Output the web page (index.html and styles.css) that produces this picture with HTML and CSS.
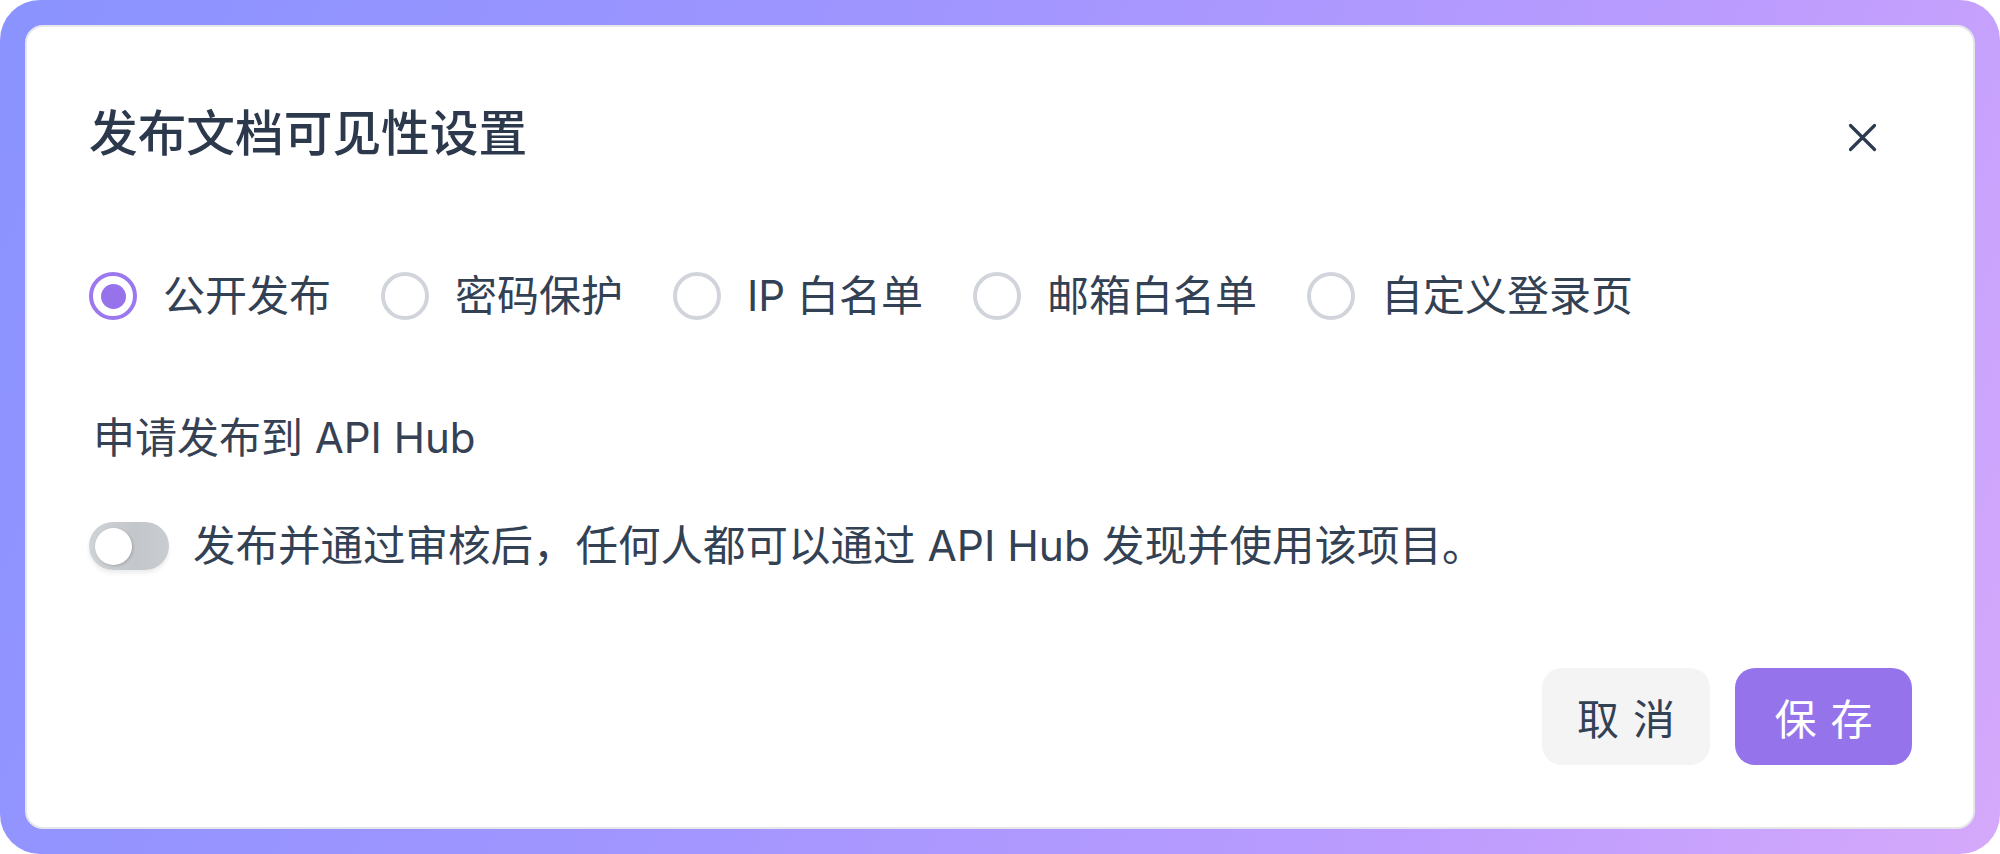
FILE: index.html
```html
<!DOCTYPE html>
<html lang="zh-CN">
<head>
<meta charset="utf-8">
<title>发布文档可见性设置</title>
<link rel="stylesheet" href="styles.css">
</head>
<body>
<div class="frame">
  <div class="card">
    <div class="header">
      <h1 class="title">发布文档可见性设置</h1>
      <button class="close" aria-label="关闭">
        <svg width="29" height="29" viewBox="0 0 29 29"><path d="M2.5 2.5 L26.5 26.5 M26.5 2.5 L2.5 26.5" stroke="#2d3a4f" stroke-width="3.2" stroke-linecap="round" fill="none"/></svg>
      </button>
    </div>

    <div class="radios">
      <label class="opt"><span class="radio checked"></span><span class="opt-text">公开发布</span></label>
      <label class="opt"><span class="radio"></span><span class="opt-text">密码保护</span></label>
      <label class="opt"><span class="radio"></span><span class="opt-text">IP 白名单</span></label>
      <label class="opt"><span class="radio"></span><span class="opt-text">邮箱白名单</span></label>
      <label class="opt"><span class="radio"></span><span class="opt-text">自定义登录页</span></label>
    </div>

    <div class="section-label">申请发布到 API Hub</div>

    <div class="toggle-row">
      <span class="toggle"><span class="knob"></span></span>
      <span class="toggle-text">发布并通过审核后，任何人都可以通过 API Hub 发现并使用该项目。</span>
    </div>

    <div class="footer">
      <button class="btn btn-cancel">取消</button>
      <button class="btn btn-save">保存</button>
    </div>
  </div>
</div>
</body>
</html>
```

FILE: styles.css
```css
* { box-sizing: border-box; }

html, body {
  margin: 0;
  padding: 0;
  background: #ffffff;
}

body {
  width: 2000px;
  height: 854px;
  font-family: "Inter", "Noto Sans CJK SC", "Noto Sans", sans-serif;
  color: #334155;
}

.frame {
  width: 2000px;
  height: 854px;
  padding: 25px;
  border-radius: 40px;
  background: linear-gradient(112deg, #8a93ff 0%, #a095ff 40%, #bc9cfe 75%, #d5a9fb 100%);
  display: flex;
}

.card {
  flex: 1;
  background: #ffffff;
  border: 2px solid #e6e7eb;
  border-radius: 18px;
  padding: 73px 61px 62px 62px;
  display: flex;
  flex-direction: column;
}

.header {
  display: flex;
  align-items: center;
  justify-content: space-between;
}

.title {
  margin: 0;
  font-size: 48.7px;
  line-height: 67px;
  font-weight: 500;
  color: #2c394d;
}

.close {
  width: 58px;
  height: 58px;
  margin: 8px 21px 0 0;
  padding: 0;
  border: none;
  background: transparent;
  display: flex;
  align-items: center;
  justify-content: center;
}

.radios {
  margin-top: 105px;
  display: flex;
  align-items: center;
  gap: 50px;
}

.opt {
  display: flex;
  align-items: center;
  gap: 26px;
}

.radio {
  width: 48px;
  height: 48px;
  border-radius: 50%;
  border: 4px solid #d1d5db;
  background: #ffffff;
  display: flex;
  align-items: center;
  justify-content: center;
}

.radio.checked {
  border-color: #9b78ee;
}

.radio.checked::after {
  content: "";
  width: 25px;
  height: 25px;
  border-radius: 50%;
  background: #9673ea;
}

.opt-text {
  font-size: 42px;
  line-height: 44px;
  color: #334155;
}

.section-label {
  margin-top: 94px;
  padding-left: 4px;
  font-size: 42px;
  line-height: 48px;
  color: #364153;
}

.toggle-row {
  margin-top: 60px;
  display: flex;
  align-items: center;
  gap: 24px;
}

.toggle {
  width: 80px;
  height: 48px;
  border-radius: 24px;
  background: linear-gradient(90deg, #d0d3d6 0%, #c3c6ca 60%, #c9ccd0 100%);
  box-shadow: 0 3px 4px rgba(0, 0, 0, 0.08);
  display: flex;
  align-items: center;
  padding-left: 6px;
}

.knob {
  width: 37px;
  height: 37px;
  border-radius: 50%;
  background: #ffffff;
  box-shadow: 1px 1px 3px rgba(0, 0, 0, 0.18);
}

.toggle-text {
  font-size: 42.5px;
  line-height: 44px;
  color: #334155;
}

.footer {
  margin-top: auto;
  display: flex;
  justify-content: flex-end;
  gap: 25px;
}

.btn {
  height: 97px;
  border: none;
  border-radius: 20px;
  font-family: "Inter", "Noto Sans CJK SC", sans-serif;
  font-size: 42px;
  letter-spacing: 14px;
  padding: 0 0 0 14px;
  display: flex;
  align-items: center;
  justify-content: center;
}

.btn-cancel {
  width: 168px;
  background: #f4f4f5;
  color: #334155;
  font-weight: 400;
}

.btn-save {
  width: 177px;
  background: #9574eb;
  color: #ffffff;
  font-weight: 400;
}
```
